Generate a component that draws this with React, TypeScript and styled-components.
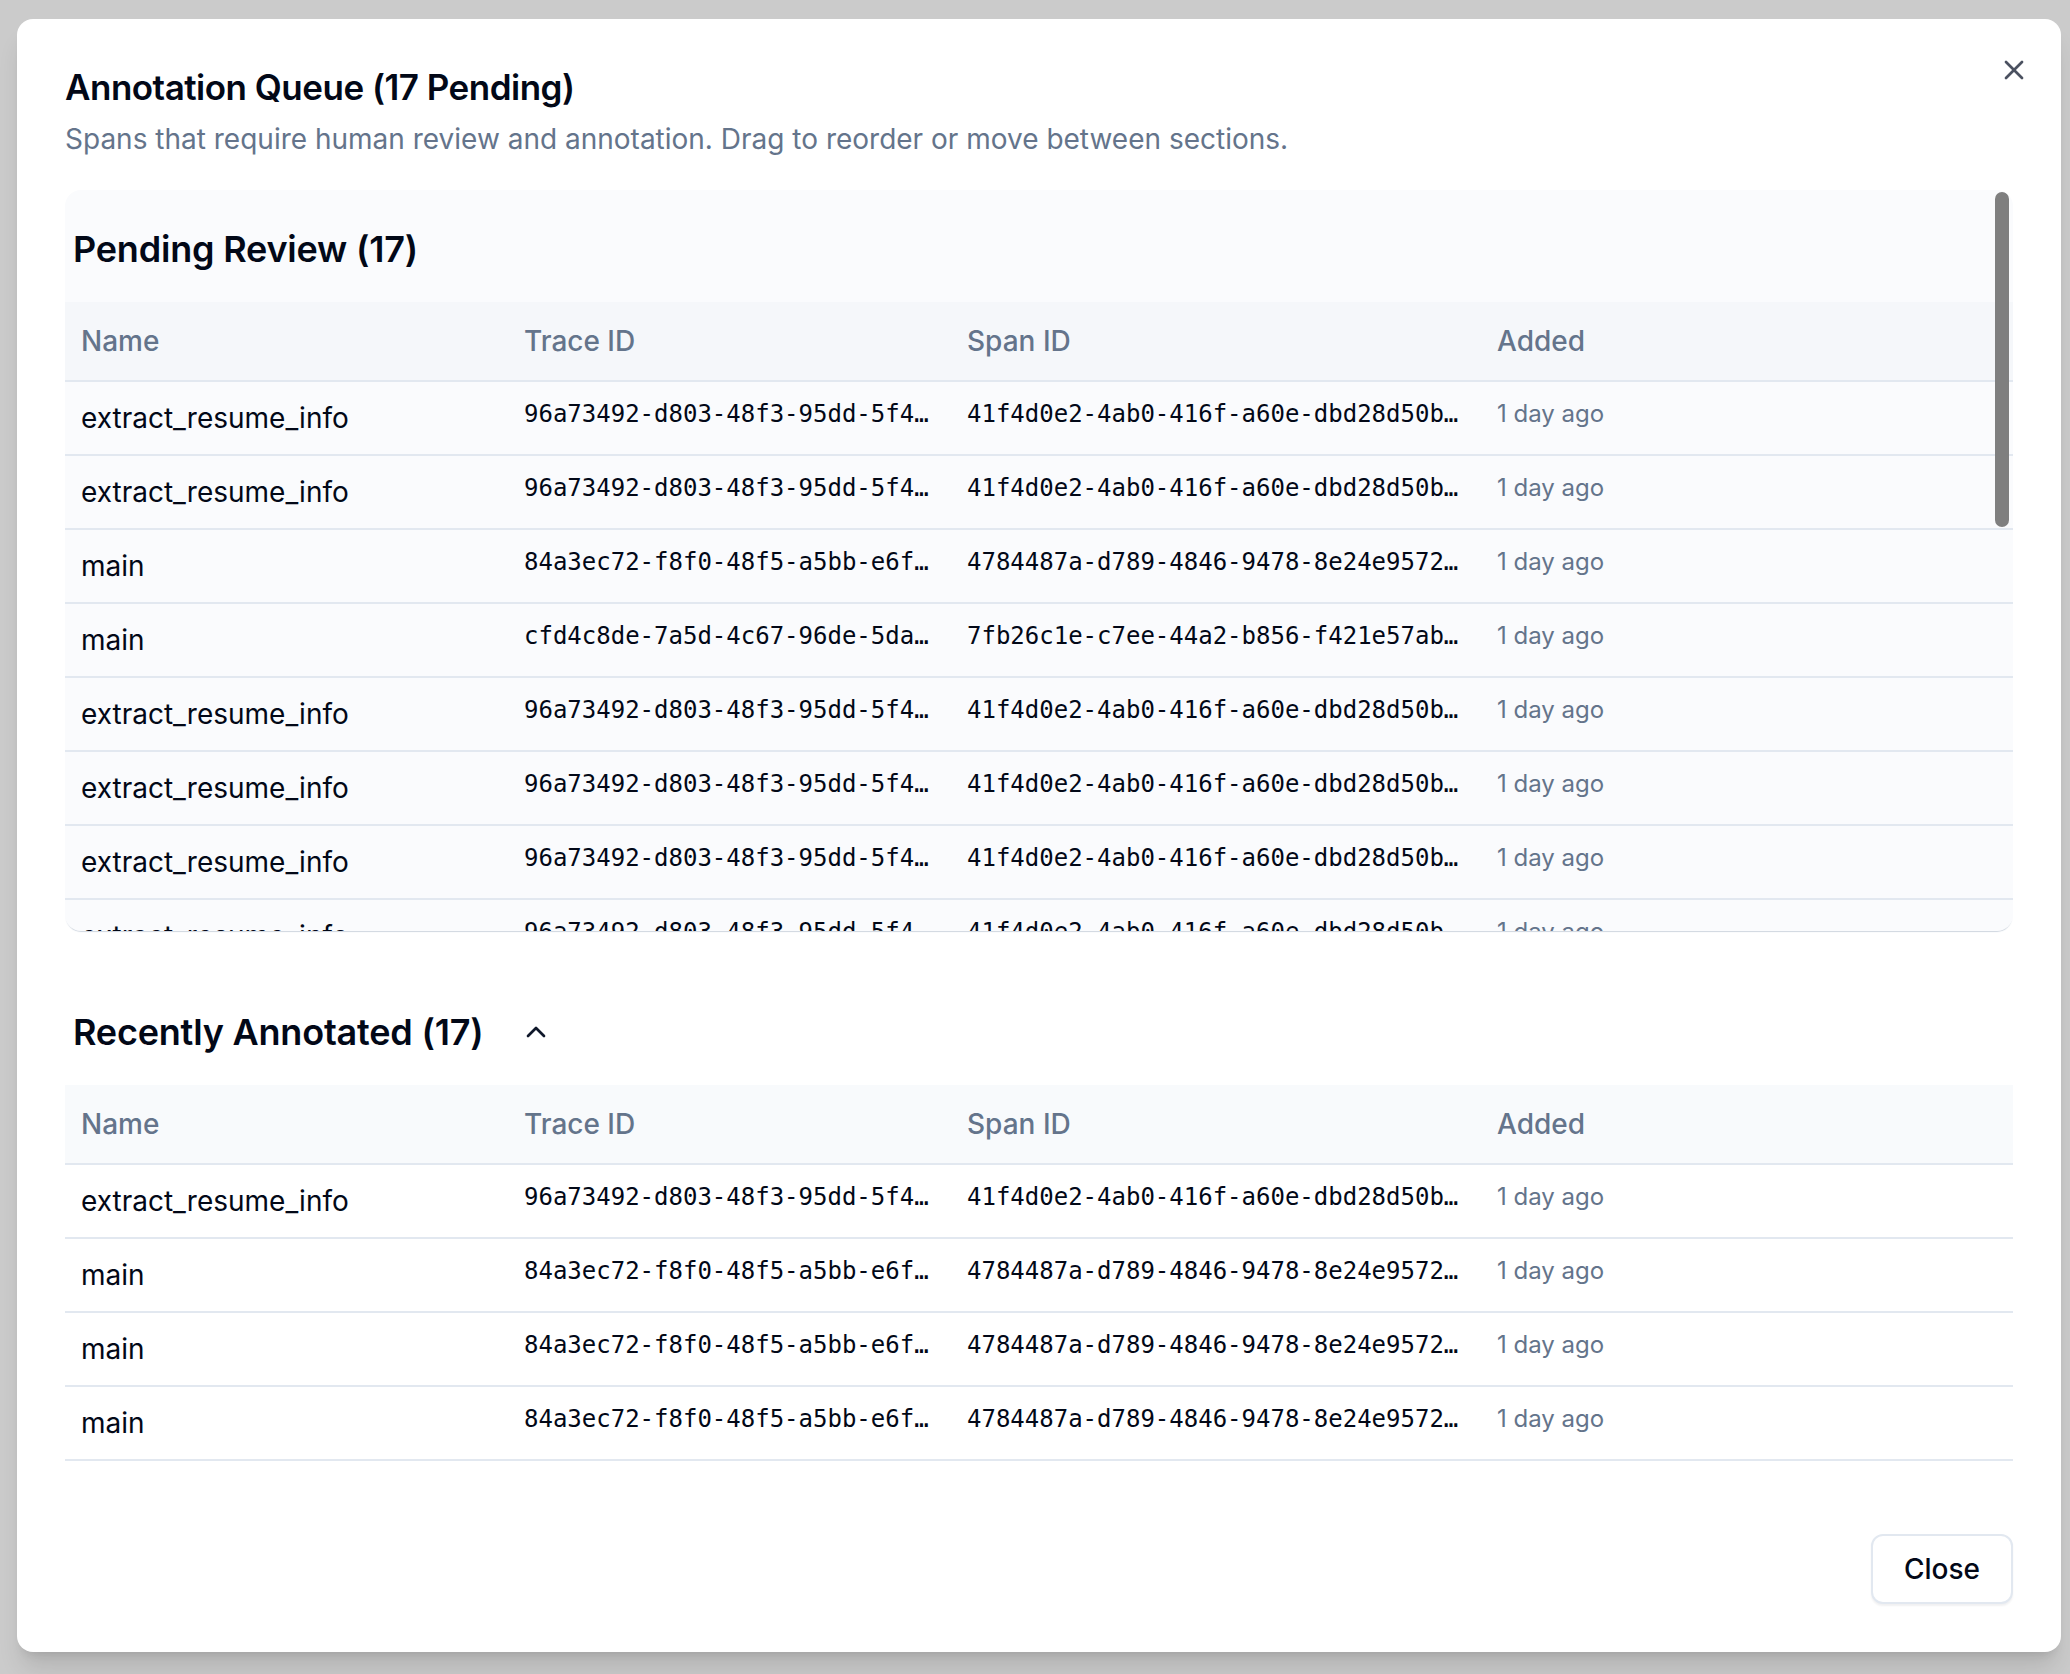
import styled, { createGlobalStyle } from 'styled-components';
import { X, ChevronUp } from 'lucide-react';

const GlobalStyle = createGlobalStyle`
  html, body {
    margin: 0;
    padding: 0;
    background: #cbcbcb;
  }
  * {
    box-sizing: border-box;
  }
`;

type Span = {
  name: string;
  traceId: string;
  spanId: string;
  added: string;
};

const RESUME: Span = {
  name: 'extract_resume_info',
  traceId: '96a73492-d803-48f3-95dd-5f4a1c2b7e90',
  spanId: '41f4d0e2-4ab0-416f-a60e-dbd28d50b3c1',
  added: '1 day ago',
};

const MAIN_A: Span = {
  name: 'main',
  traceId: '84a3ec72-f8f0-48f5-a5bb-e6f2d9a01b47',
  spanId: '4784487a-d789-4846-9478-8e24e95726da',
  added: '1 day ago',
};

const MAIN_B: Span = {
  name: 'main',
  traceId: 'cfd4c8de-7a5d-4c67-96de-5dab37e1f024',
  spanId: '7fb26c1e-c7ee-44a2-b856-f421e57ab8d3',
  added: '1 day ago',
};

const pending: Span[] = [
  RESUME, RESUME, MAIN_A, MAIN_B, RESUME, RESUME, RESUME, RESUME,
  MAIN_A, RESUME, MAIN_B, RESUME, MAIN_A, RESUME, RESUME, MAIN_A, RESUME,
];

const annotated: Span[] = [RESUME, MAIN_A, MAIN_A, MAIN_A];

const Backdrop = styled.div`
  width: 100%;
  min-height: 100vh;
  padding: 19px 0 0 17px;
  background: #cbcbcb;
  font-family: Inter, 'Noto Sans', sans-serif;
`;

const Dialog = styled.div`
  position: relative;
  width: 2044px;
  height: 1633px;
  background: #ffffff;
  border-radius: 16px;
  padding: 48px;
  display: flex;
  flex-direction: column;
  box-shadow: 0 20px 25px -5px rgba(0, 0, 0, 0.12), 0 8px 10px -6px rgba(0, 0, 0, 0.1);
`;

const CloseIcon = styled.button`
  position: absolute;
  top: 35px;
  right: 31px;
  width: 32px;
  height: 32px;
  padding: 0;
  border: none;
  background: none;
  color: #4b5160;
  display: flex;
  cursor: pointer;
`;

const Header = styled.div`
  display: flex;
  flex-direction: column;
  gap: 14px;
  padding-top: 2px;
`;

const Title = styled.h2`
  margin: 0;
  font-size: 35px;
  line-height: 36px;
  font-weight: 600;
  color: #020817;
  letter-spacing: -0.5px;
`;

const Description = styled.p`
  margin: 0;
  font-size: 28px;
  line-height: 40px;
  color: #64748b;
`;

const Body = styled.div`
  flex: 1;
  display: flex;
  flex-direction: column;
  margin-top: 31px;
`;

const PendingFrame = styled.div`
  position: relative;
  height: 741px;
  border-radius: 16px;
  overflow: hidden;
  background: #fafbfd;
  box-shadow: 0 2px 1px -1px rgba(148, 163, 184, 0.45);
`;

const ScrollArea = styled.div`
  height: 100%;
  overflow-y: auto;
  scrollbar-width: none;
  &::-webkit-scrollbar {
    display: none;
  }
`;

const Thumb = styled.div`
  position: absolute;
  top: 2px;
  right: 4px;
  width: 14px;
  height: 335px;
  border-radius: 7px;
  background: #7f7f7f;
`;

const SectionHeading = styled.div`
  display: flex;
  align-items: center;
  gap: 37px;
  padding: 31px 8px 25px;
  height: 112px;
  color: #020817;
`;

const SectionTitle = styled.h3`
  margin: 0;
  font-size: 36px;
  line-height: 56px;
  font-weight: 600;
  letter-spacing: -0.2px;
`;

const Annotated = styled.div`
  margin-top: 42px;
`;

const Row = styled.div<{ $head?: boolean; $tint?: boolean }>`
  display: grid;
  grid-template-columns: 443px 443px 530px 1fr;
  align-items: center;
  height: ${(p) => (p.$head ? 80 : 74)}px;
  border-bottom: 2px solid #e2e8f0;
  background: ${(p) => (p.$head ? (p.$tint ? '#f5f7fa' : '#f8fafc') : 'transparent')};
`;

const HeadCell = styled.div`
  padding: 0 16px;
  font-size: 28px;
  font-weight: 500;
  color: #64748b;
`;

const NameCell = styled.div`
  padding: 0 16px;
  font-size: 28px;
  line-height: 40px;
  color: #020817;
`;

const IdCell = styled.div`
  padding: 0 16px 8px;
  display: flex;
  align-items: center;
`;

const Mono = styled.span<{ $max: number }>`
  display: block;
  max-width: ${(p) => p.$max}px;
  overflow: hidden;
  white-space: nowrap;
  text-overflow: ellipsis;
  font-family: 'DejaVu Sans Mono', 'Liberation Mono', monospace;
  font-size: 24px;
  line-height: 32px;
  color: #020817;
`;

const AddedCell = styled.div`
  padding: 0 16px 8px;
  font-size: 24px;
  line-height: 32px;
  color: #64748b;
`;

const Footer = styled.div`
  display: flex;
  justify-content: flex-end;
`;

const CloseButton = styled.button`
  width: 142px;
  height: 70px;
  border: 2px solid #e2e8f0;
  border-radius: 12px;
  background: #ffffff;
  font-family: Inter, 'Noto Sans', sans-serif;
  font-size: 28px;
  font-weight: 500;
  color: #020817;
  box-shadow: 0 2px 2px rgba(15, 23, 42, 0.06);
  cursor: pointer;
`;

const SpanTable = ({ rows, tint }: { rows: Span[]; tint?: boolean }) => (
  <div>
    <Row $head $tint={tint}>
      <HeadCell>Name</HeadCell>
      <HeadCell>Trace ID</HeadCell>
      <HeadCell>Span ID</HeadCell>
      <HeadCell>Added</HeadCell>
    </Row>
    {rows.map((r, i) => (
      <Row key={i}>
        <NameCell>{r.name}</NameCell>
        <IdCell>
          <Mono $max={408}>{r.traceId}</Mono>
        </IdCell>
        <IdCell>
          <Mono $max={500}>{r.spanId}</Mono>
        </IdCell>
        <AddedCell>{r.added}</AddedCell>
      </Row>
    ))}
  </div>
);

const App = () => {
  return (
    <Backdrop>
      <GlobalStyle />
      <Dialog>
        <CloseIcon aria-label="Close">
          <X size={32} strokeWidth={2} />
        </CloseIcon>
        <Header>
          <Title>Annotation Queue (17 Pending)</Title>
          <Description>
            Spans that require human review and annotation. Drag to reorder or move between sections.
          </Description>
        </Header>
        <Body>
          <PendingFrame>
            <ScrollArea>
              <SectionHeading>
                <SectionTitle>Pending Review (17)</SectionTitle>
              </SectionHeading>
              <SpanTable rows={pending} tint />
            </ScrollArea>
            <Thumb />
          </PendingFrame>
          <Annotated>
            <SectionHeading>
              <SectionTitle>Recently Annotated (17)</SectionTitle>
              <ChevronUp size={32} strokeWidth={2} color="#0f172a" />
            </SectionHeading>
            <SpanTable rows={annotated} />
          </Annotated>
        </Body>
        <Footer>
          <CloseButton>Close</CloseButton>
        </Footer>
      </Dialog>
    </Backdrop>
  );
};

export default App;
